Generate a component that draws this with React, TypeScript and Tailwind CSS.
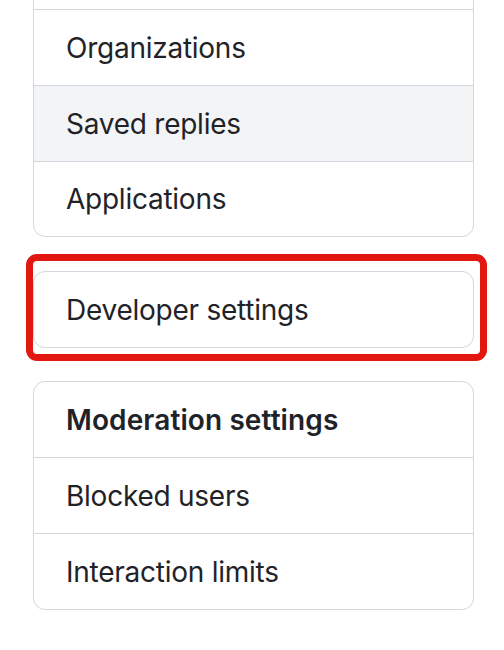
import React from "react";

type Item = { label: string; active?: boolean; heading?: boolean; h?: string };

const accountItems: Item[] = [
  { label: "" },
  { label: "Organizations" },
  { label: "Saved replies", active: true },
  { label: "Applications", h: "h-[75px]" },
];

const moderationItems: Item[] = [
  { label: "Moderation settings", heading: true },
  { label: "Blocked users" },
  { label: "Interaction limits" },
];

function MenuBox({ items }: { items: Item[] }) {
  return (
    <div className="w-[441px] rounded-[12px] border border-[#d0d7de] bg-white overflow-hidden">
      {items.map((item, i) => (
        <div
          key={i}
          className={
            "flex items-center px-8 text-[28px] text-[#1f2328] " +
            (i > 0 ? "border-t border-[#d0d7de] " : "") +
            (item.h ? item.h + " " : i > 0 ? "h-[76px] " : "h-[75px] ") +
            (item.active ? "bg-[#f3f4f6] " : "") +
            (item.heading ? "font-semibold tracking-[0.1px]" : "font-normal tracking-[-0.25px]")
          }
        >
          {item.label}
        </div>
      ))}
    </div>
  );
}

export default function App() {
  return (
    <div
      className="w-[504px] h-[650px] overflow-hidden bg-white"
      style={{ fontFamily: "Inter, 'Liberation Sans', sans-serif" }}
    >
      <div className="ml-[33px] mt-[-67px]">
        <MenuBox items={accountItems} />

        {/* highlighted entry with the red annotation frame */}
        <div className="relative mt-[34px]">
          <MenuBox items={[{ label: "Developer settings" }]} />
          <div className="absolute left-[-7px] top-[-17px] w-[461px] h-[107px] rounded-[11px] border-[7px] border-[#e2170f] pointer-events-none" />
        </div>

        <div className="mt-[33px]">
          <MenuBox items={moderationItems} />
        </div>
      </div>
    </div>
  );
}
